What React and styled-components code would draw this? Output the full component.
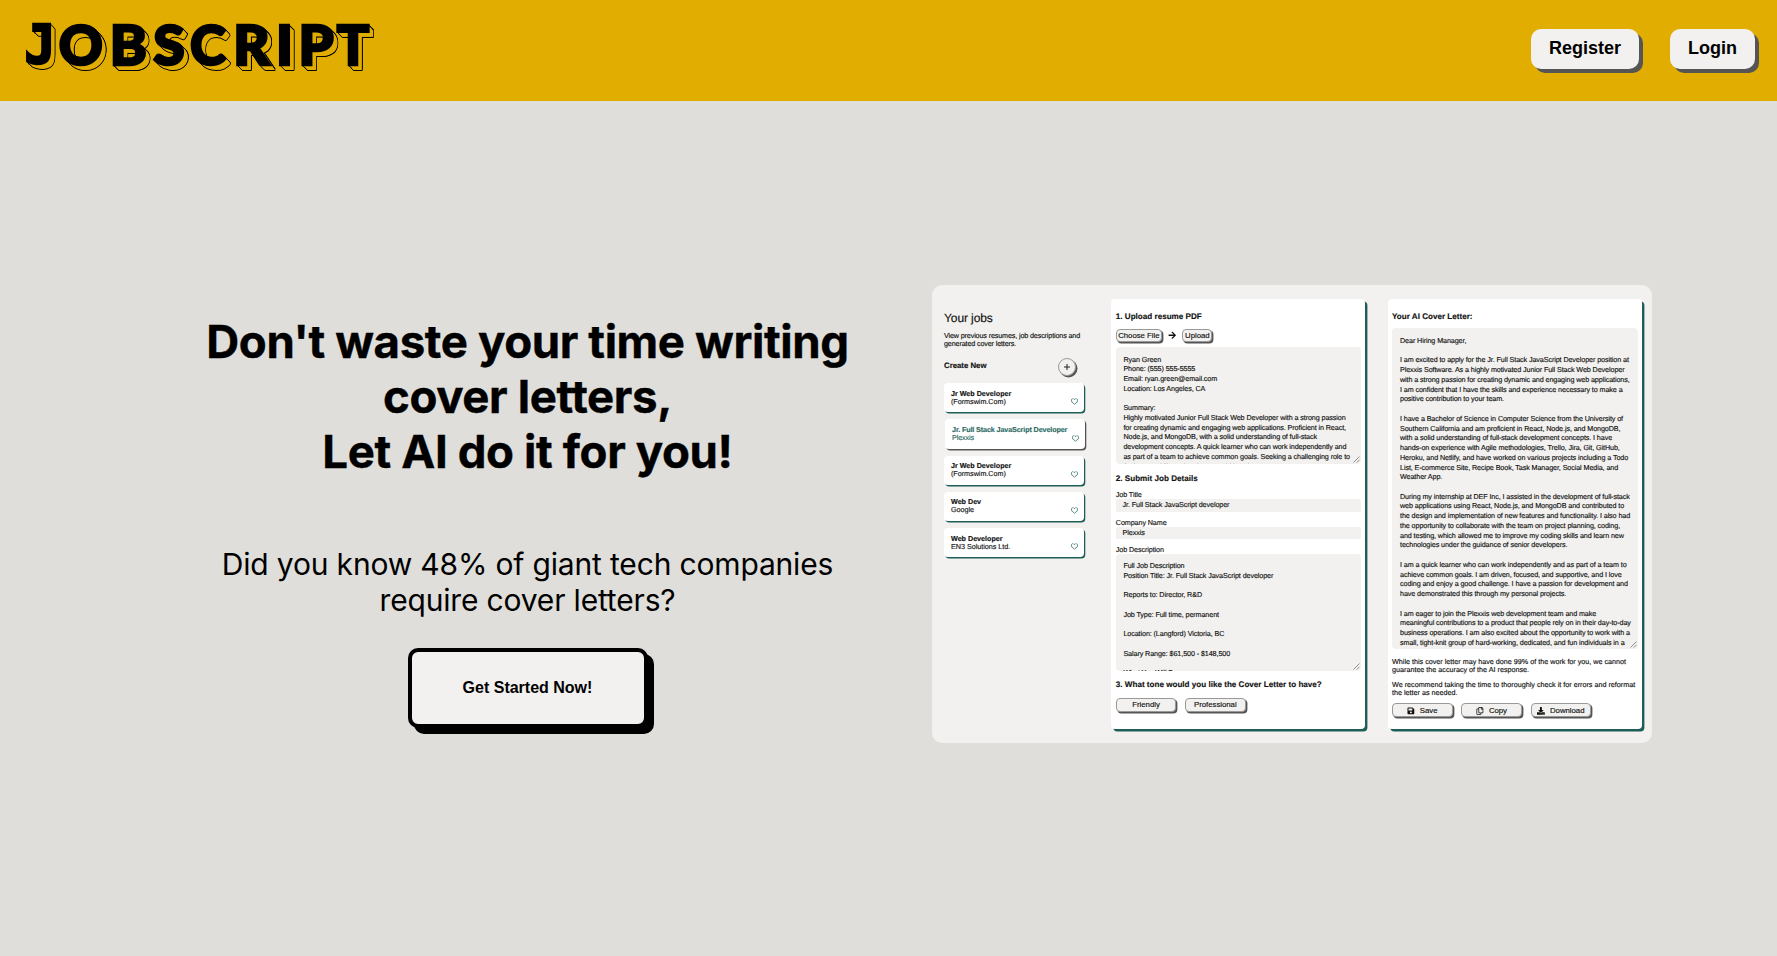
import React from "react";
import styled, { createGlobalStyle } from "styled-components";
import { FaSave, FaRegCopy, FaDownload, FaArrowRight, FaRegHeart } from "react-icons/fa";

const GlobalStyle = createGlobalStyle`
  *, *::before, *::after { box-sizing: border-box; }
  body { margin: 0; background: #dfdeda; color: #000; font-family: Inter, sans-serif; overflow: hidden; }
  h1, h2, h3, p { margin: 0; }
  button { font: inherit; color: inherit; letter-spacing: inherit; }
`;

const Page = styled.div`
  height: 956px;
  display: flex;
  flex-direction: column;
`;

const Header = styled.header`
  height: 101px;
  flex: none;
  background: #e1ad01;
  display: flex;
  align-items: flex-start;
  justify-content: space-between;
  padding: 0 22px 0 26px;
`;

/* Solid offset copies in the bar colour over slightly larger black copies: an outlined 3D edge. */
const steps = [0.5, 1, 1.5, 2, 2.5, 3, 3.5, 4, 4.5, 5];
const extrusion = [
  ...steps.map((s) => `${s}px ${s}px 0 #e1ad01`),
  ...steps.flatMap((s) =>
    [[-0.8, 0], [0.8, 0], [0, -0.8], [0, 0.8], [0.6, 0.6], [0.6, -0.6], [-0.6, 0.6]].map(
      ([x, y]) => `${s + x}px ${s + y}px 0 #000`
    )
  ),
].join(", ");

const Logo = styled.div`
  display: flex;
  height: 42px;
  margin-top: 23px;
  font: 900 56px/42px Lato, sans-serif;
  -webkit-text-stroke: 2.6px #000;
  text-shadow: ${extrusion};
`;

const Letter = styled.span`
  width: ${(p) => p.$w}px;
  margin-right: ${(p) => p.$gap}px;
  display: flex;
  justify-content: center;
  transform: scale(${(p) => p.$sx || 1}, ${(p) => p.$sy || 1});
  ${(p) => p.$mono && "margin-top: 0.7px; font-family: 'DejaVu Sans Mono', monospace; font-weight: 700;"}
`;

const Nav = styled.nav`
  display: flex;
  gap: 31px;
  margin-top: 29px;
`;

const NavButton = styled.button`
  width: ${(p) => p.$w}px;
  height: 40px;
  padding: 0 0 2px;
  border: 0;
  border-radius: 10px;
  background: #f2f1ef;
  box-shadow: 4px 4px 0 #555;
  font: bold 18px "Liberation Sans", Arial, sans-serif;
`;

const Hero = styled.main`
  display: flex;
  align-items: flex-start;
  padding-left: 182px;
`;

const Pitch = styled.section`
  width: 691px;
  margin: 213px 59px 0 0;
  display: flex;
  flex-direction: column;
  align-items: center;
  text-align: center;
`;

const Headline = styled.h1`
  font-size: 45.6px;
  font-weight: 700;
  line-height: 55px;
  letter-spacing: -0.38px;
  white-space: nowrap;
  -webkit-text-stroke: 0.4px #000;
`;

const Fact = styled.p`
  margin-top: 67px;
  font-size: 30px;
  line-height: 36px;
  letter-spacing: -0.17px;
  white-space: nowrap;
`;

const StartButton = styled.button`
  width: 240px;
  height: 80px;
  margin-top: 30px;
  padding: 0;
  border: 4px solid #000;
  border-radius: 10px;
  background: #f2f1ef;
  box-shadow: 6px 6px 0 #000;
  font: bold 16px "Liberation Sans", Arial, sans-serif;
`;

const Preview = styled.section`
  width: 720px;
  height: 458px;
  margin-top: 184px;
  padding: 14px 10px 0 12px;
  display: flex;
  border-radius: 10px;
  background: #f2f1ef;
  color: #111;
  font: 7.2px/8px "Liberation Sans", Arial, sans-serif;
  letter-spacing: -0.1px;
  text-rendering: geometricPrecision;
  -webkit-text-stroke: 0.15px currentColor;
  white-space: nowrap;
`;

const Sidebar = styled.aside`
  width: 167px;
  padding-top: 12px;
`;

const SidebarTitle = styled.h2`
  font-size: 12px;
  font-weight: 400;
  line-height: 14px;
`;

const SidebarText = styled.p`
  margin-top: 7px;
  letter-spacing: -0.14px;
`;

const CreateRow = styled.div`
  width: 132px;
  height: 18px;
  margin: 10px 0 7px;
  display: flex;
  justify-content: space-between;
  font-size: 7.8px;
  font-weight: 700;
  line-height: 15px;
  letter-spacing: 0;
`;

const AddButton = styled.button`
  width: 18px;
  height: 18px;
  padding: 0;
  display: grid;
  place-items: center;
  border: 1px solid #999;
  border-radius: 50%;
  background: #f2f1ef;
  box-shadow: 1.5px 1.5px 0 #555;
`;

const JobCard = styled.article`
  width: 140px;
  height: 29.3px;
  margin: 0 0 7px ${(p) => (p.$active ? 1 : 0)}px;
  padding: 6.5px 6px 0 7px;
  position: relative;
  border-radius: 4px;
  background: #fff;
  color: ${(p) => (p.$active ? "#2c6a63" : "#111")};
  box-shadow: 1.3px 1.5px 0 ${(p) => (p.$active ? "#555" : "#1f5e58")};
  letter-spacing: ${(p) => (p.$active ? -0.12 : -0.02)}px;
`;

const Heart = styled(FaRegHeart)`
  position: absolute;
  right: 6px;
  bottom: 7px;
  color: #2c6a63;
  font-size: 7px;
`;

const Card = styled.section`
  width: 254.5px;
  height: 429.5px;
  margin-right: ${(p) => p.$gap || 0}px;
  padding: 12.7px 4px 0 ${(p) => p.$left || 5}px;
  flex: none;
  border-radius: 4px;
  background: #fff;
  box-shadow: 2.4px 2.4px 0 #1f5e58;
`;

const Step = styled.h3`
  margin-top: ${(p) => p.$top || 0}px;
  height: 10px;
  font-size: 8.1px;
  line-height: 10px;
  letter-spacing: 0;
`;

const ButtonRow = styled.div`
  display: flex;
  align-items: center;
  gap: ${(p) => p.$gap}px;
  margin-top: ${(p) => p.$top}px;
`;

const SmallButton = styled.button`
  width: ${(p) => p.$w || 60.5}px;
  height: 13.8px;
  padding: 0.8px 0 0;
  display: flex;
  align-items: center;
  justify-content: center;
  gap: 5px;
  border: 0.8px solid #999;
  border-radius: 4px;
  background: #f2f1ef;
  box-shadow: 1.4px 1.4px 0 #555;
  font-size: 7.8px;
  letter-spacing: -0.03px;
`;

const Area = styled.div`
  height: ${(p) => p.$h}px;
  margin-top: ${(p) => p.$top || 0}px;
  padding: ${(p) => p.$pad || 8}px 0 0 ${(p) => p.$left || 7.6}px;
  position: relative;
  overflow: hidden;
  border-radius: 4px;
  background: #f2f1ef;
  line-height: 9.74px;
  white-space: pre;
`;

const Grip = styled.svg`
  position: absolute;
  right: 1px;
  bottom: 1px;
  width: 7px;
  height: 7px;
`;

const Label = styled.label`
  display: block;
  height: 8px;
  margin-top: ${(p) => p.$top}px;
`;

const Field = styled.div`
  height: 12.5px;
  padding-left: 6.8px;
  border-radius: 2px;
  background: #f2f1ef;
  line-height: 12.5px;
`;

const Note = styled.p`
  margin-top: ${(p) => p.$top}px;
  letter-spacing: 0;
`;

/* glyph, cell width, gap after, x scale, y scale, slab variant */
const letters = [
  ["J", 28.2, 4.8, 0.92, 0.95, true],
  ["O", 43.5, 8, 0.97, 0.99],
  ["B", 35.5, 7.5, 1, 1],
  ["S", 32, 5, 1.02, 0.99],
  ["C", 36, 7, 0.97, 0.99],
  ["R", 36, 9.5, 1, 1],
  ["I", 11, 9, 1, 1],
  ["P", 34, 3.5, 1, 1],
  ["T", 34, 0, 0.96, 1],
];

const jobs = [
  ["Jr Web Developer", "(Formswim.Com)"],
  ["Jr. Full Stack JavaScript Developer", "Plexxis"],
  ["Jr Web Developer", "(Formswim.Com)"],
  ["Web Dev", "Google"],
  ["Web Developer", "EN3 Solutions Ltd."],
];

const resume = `Ryan Green
Phone: (555) 555-5555
Email: ryan.green@email.com
Location: Los Angeles, CA

Summary:
Highly motivated Junior Full Stack Web Developer with a strong passion
for creating dynamic and engaging web applications. Proficient in React,
Node.js, and MongoDB, with a solid understanding of full-stack
development concepts. A quick learner who can work independently and
as part of a team to achieve common goals. Seeking a challenging role to
further my skills and make an ambitious impact.`;

const description = `Full Job Description
Position Title: Jr. Full Stack JavaScript developer

Reports to: Director, R&D

Job Type: Full time, permanent

Location: (Langford) Victoria, BC

Salary Range: $61,500 - $148,500

What You Will Do`;

const letter = `Dear Hiring Manager,

I am excited to apply for the Jr. Full Stack JavaScript Developer position at
Plexxis Software. As a highly motivated Junior Full Stack Web Developer
with a strong passion for creating dynamic and engaging web applications,
I am confident that I have the skills and experience necessary to make a
positive contribution to your team.

I have a Bachelor of Science in Computer Science from the University of
Southern California and am proficient in React, Node.js, and MongoDB,
with a solid understanding of full-stack development concepts. I have
hands-on experience with Agile methodologies, Trello, Jira, Git, GitHub,
Heroku, and Netlify, and have worked on various projects including a Todo
List, E-commerce Site, Recipe Book, Task Manager, Social Media, and
Weather App.

During my internship at DEF Inc, I assisted in the development of full-stack
web applications using React, Node.js, and MongoDB and contributed to
the design and implementation of new features and functionality. I also had
the opportunity to collaborate with the team on project planning, coding,
and testing, which allowed me to improve my coding skills and learn new
technologies under the guidance of senior developers.

I am a quick learner who can work independently and as part of a team to
achieve common goals. I am driven, focused, and supportive, and I love
coding and enjoy a good challenge. I have a passion for development and
have demonstrated this through my personal projects.

I am eager to join the Plexxis web development team and make
meaningful contributions to a product that people rely on in their day-to-day
business operations. I am also excited about the opportunity to work with a
small, tight-knit group of hard-working, dedicated, and fun individuals in a`;

function TextBox({ children, ...rest }) {
  return (
    <Area {...rest}>
      {children}
      <Grip viewBox="0 0 7 7" stroke="#666" strokeWidth="0.7">
        <path d="M0.5 6.5 6.5 0.5M3.8 6.5 6.5 3.8" />
      </Grip>
    </Area>
  );
}

export default function App() {
  return (
    <Page>
      <GlobalStyle />
      <Header>
        <Logo>
          {letters.map(([ch, w, gap, sx, sy, mono], i) => (
            <Letter key={i} $w={w} $gap={gap} $sx={sx} $sy={sy} $mono={mono}>{ch}</Letter>
          ))}
        </Logo>
        <Nav>
          <NavButton $w={108}>Register</NavButton>
          <NavButton $w={85}>Login</NavButton>
        </Nav>
      </Header>
      <Hero>
        <Pitch>
          <Headline>Don't waste your time writing<br />cover letters,<br />Let AI do it for you!</Headline>
          <Fact>Did you know 48% of giant tech companies<br />require cover letters?</Fact>
          <StartButton>Get Started Now!</StartButton>
        </Pitch>
        <Preview>
          <Sidebar>
            <SidebarTitle>Your jobs</SidebarTitle>
            <SidebarText>View previous resumes, job descriptions and<br />generated cover letters.</SidebarText>
            <CreateRow>
              Create New
              <AddButton aria-label="Create">
                <svg width="6" height="6" viewBox="0 0 6 6" stroke="#222" strokeWidth="1"><path d="M3 0v6M0 3h6" /></svg>
              </AddButton>
            </CreateRow>
            {jobs.map(([title, company], i) => (
              <JobCard key={i} $active={i === 1}>
                <b>{title}</b><br />{company}
                <Heart />
              </JobCard>
            ))}
          </Sidebar>
          <Card $gap={22.2}>
            <Step>1. Upload resume PDF</Step>
            <ButtonRow $top={7} $gap={6}>
              <SmallButton $w={46}>Choose File</SmallButton>
              <FaArrowRight size={8.5} />
              <SmallButton $w={30}>Upload</SmallButton>
            </ButtonRow>
            <TextBox $h={117} $top={4.5} $pad={7.6}>{resume}</TextBox>
            <Step $top={10.5}>2. Submit Job Details</Step>
            <Label $top={6.8}>Job Title</Label>
            <Field>Jr. Full Stack JavaScript developer</Field>
            <Label $top={7}>Company Name</Label>
            <Field>Plexxis</Field>
            <Label $top={7}>Job Description</Label>
            <TextBox $h={116.5} $pad={7}>{description}</TextBox>
            <Step $top={9.7}>3. What tone would you like the Cover Letter to have?</Step>
            <ButtonRow $top={7.7} $gap={8.8}>
              <SmallButton>Friendly</SmallButton>
              <SmallButton>Professional</SmallButton>
            </ButtonRow>
          </Card>
          <Card $left={4.5}>
            <Step>Your AI Cover Letter:</Step>
            <TextBox $h={321.5} $top={6.3} $left={8}>{letter}</TextBox>
            <Note $top={9}>While this cover letter may have done 99% of the work for you, we cannot<br />guarantee the accuracy of the AI response.</Note>
            <Note $top={6.5}>We recommend taking the time to thoroughly check it for errors and reformat<br />the letter as needed.</Note>
            <ButtonRow $top={6.5} $gap={8.8}>
              <SmallButton><FaSave />Save</SmallButton>
              <SmallButton><FaRegCopy />Copy</SmallButton>
              <SmallButton><FaDownload />Download</SmallButton>
            </ButtonRow>
          </Card>
        </Preview>
      </Hero>
    </Page>
  );
}
